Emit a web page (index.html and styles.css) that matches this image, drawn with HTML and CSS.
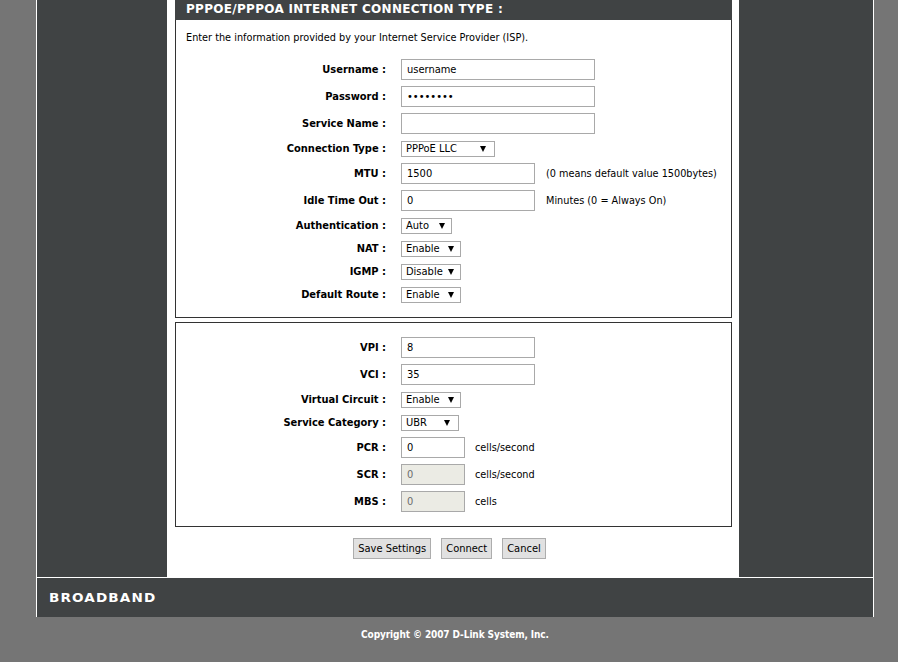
FILE: index.html
```html
<!DOCTYPE html>
<html>
<head>
<meta charset="utf-8">
<title>PPPoE/PPPoA Internet Connection Type</title>
<link rel="stylesheet" href="styles.css">
</head>
<body>
<div class="wrap">
  <div class="cols">
    <div class="side side-left"></div>
    <div class="main">
      <div class="box">
        <h2 class="box-head">PPPoE/PPPoA Internet Connection Type :</h2>
        <div class="box-body box-first">
          <p class="intro">Enter the information provided by your Internet Service Provider (ISP).</p>
          <div class="form">
            <div class="row row-text"><label class="lbl">Username :</label><input class="tin w-long" type="text" value="username"></div>
            <div class="row row-text"><label class="lbl">Password :</label><input class="tin w-long" type="password" value="password"></div>
            <div class="row row-text"><label class="lbl">Service Name :</label><input class="tin w-long" type="text" value=""></div>
            <div class="row row-sel"><label class="lbl">Connection Type :</label><span class="sel w-conn"><span class="sel-text">PPPoE LLC</span><span class="arrow"></span></span></div>
            <div class="row row-text"><label class="lbl">MTU :</label><input class="tin w-mid" type="text" value="1500"><span class="note">(0 means default value 1500bytes)</span></div>
            <div class="row row-text"><label class="lbl">Idle Time Out :</label><input class="tin w-mid" type="text" value="0"><span class="note">Minutes (0 = Always On)</span></div>
            <div class="row row-sel"><label class="lbl">Authentication :</label><span class="sel w-auth"><span class="sel-text">Auto</span><span class="arrow"></span></span></div>
            <div class="row row-sel"><label class="lbl">NAT :</label><span class="sel w-en"><span class="sel-text">Enable</span><span class="arrow"></span></span></div>
            <div class="row row-sel"><label class="lbl">IGMP :</label><span class="sel w-en"><span class="sel-text">Disable</span><span class="arrow"></span></span></div>
            <div class="row row-sel"><label class="lbl">Default Route :</label><span class="sel w-en"><span class="sel-text">Enable</span><span class="arrow"></span></span></div>
          </div>
        </div>
      </div>
      <div class="box-body box-second">
        <div class="form">
          <div class="row row-text"><label class="lbl">VPI :</label><input class="tin w-mid" type="text" value="8"></div>
          <div class="row row-text"><label class="lbl">VCI :</label><input class="tin w-mid" type="text" value="35"></div>
          <div class="row row-sel"><label class="lbl">Virtual Circuit :</label><span class="sel w-en"><span class="sel-text">Enable</span><span class="arrow"></span></span></div>
          <div class="row row-sel"><label class="lbl">Service Category :</label><span class="sel w-cat"><span class="sel-text">UBR</span><span class="arrow"></span></span></div>
          <div class="row row-text"><label class="lbl">PCR :</label><input class="tin w-short" type="text" value="0"><span class="note note-s">cells/second</span></div>
          <div class="row row-text"><label class="lbl">SCR :</label><input class="tin w-short" type="text" value="0" disabled><span class="note note-s">cells/second</span></div>
          <div class="row row-text"><label class="lbl">MBS :</label><input class="tin w-short" type="text" value="0" disabled><span class="note note-s">cells</span></div>
        </div>
      </div>
      <div class="buttons">
        <button class="btn" type="button">Save Settings</button>
        <button class="btn" type="button">Connect</button>
        <button class="btn" type="button">Cancel</button>
      </div>
    </div>
    <div class="side side-right"></div>
  </div>
  <div class="footer"><span class="brand">BROADBAND</span></div>
</div>
<div class="copyright">Copyright &copy; 2007 D-Link System, Inc.</div>
</body>
</html>
```
FILE: styles.css
```css
html, body {
  margin: 0;
  padding: 0;
}
body {
  background: #757575;
  font-family: "DejaVu Sans Condensed", "Liberation Sans", sans-serif;
  font-size: 11px;
  color: #000;
}
.wrap {
  margin-left: 36px;
  width: 836px;
  border-left: 1px solid #fff;
  border-right: 1px solid #fff;
}
.cols {
  display: flex;
  height: 577px;
}
.side {
  background: #404344;
}
.side-left {
  width: 130px;
}
.side-right {
  width: 134px;
}
.main {
  width: 572px;
  box-sizing: border-box;
  padding: 0 7px 0 8px;
  background: #fff;
}
.box-head {
  margin: 0;
  height: 20px;
  line-height: 19px;
  padding-left: 11px;
  background: #404344;
  color: #fff;
  font-family: "DejaVu Sans", Verdana, sans-serif;
  font-size: 12px;
  font-weight: bold;
  letter-spacing: 0.3px;
  text-transform: uppercase;
}
.box-body {
  border: 1px solid #333;
}
.box-first {
  border-top: 0;
  height: 298px;
  box-sizing: border-box;
}
.box-second {
  margin-top: 4px;
  height: 205px;
  box-sizing: border-box;
  padding-top: 11px;
}
.intro {
  margin: 0;
  padding: 11px 0 0 10px;
  height: 25px;
  line-height: 14px;
  font-size: 10.8px;
}
.form {
  display: flex;
  flex-direction: column;
}
.row {
  display: flex;
  align-items: center;
}
.row-text {
  height: 27px;
}
.row-sel {
  height: 23px;
}
.lbl {
  width: 210px;
  margin-right: 15px;
  text-align: right;
  font-weight: bold;
  white-space: nowrap;
}
.tin {
  box-sizing: border-box;
  height: 21px;
  margin: 0;
  padding: 0 0 0 5px;
  border: 1px solid #a9a9a9;
  background: #fff;
  font-family: "DejaVu Sans Condensed", "Liberation Sans", sans-serif;
  font-size: 11px;
  color: #000;
  outline: none;
}
.tin:disabled {
  background: #ebebe4;
  color: #6d6d6d;
}
.w-long { width: 194px; }
.w-mid { width: 134px; }
.w-short { width: 64px; }
.note {
  margin-left: 11px;
  white-space: nowrap;
  font-size: 10.8px;
}
.note-s {
  margin-left: 10px;
}
.sel {
  box-sizing: border-box;
  height: 16px;
  display: flex;
  align-items: center;
  justify-content: space-between;
  padding: 0 6px 0 4px;
  border: 1px solid #a9a9a9;
  background: #fff;
  font-size: 11px;
}
.w-conn { width: 94px; padding-right: 8px; }
.w-auth { width: 51px; }
.w-en { width: 60px; }
.w-cat { width: 58px; padding-right: 8px; }
.arrow {
  width: 0;
  height: 0;
  border-left: 3.5px solid transparent;
  border-right: 3.5px solid transparent;
  border-top: 6px solid #000;
}
.buttons {
  display: flex;
  justify-content: center;
  gap: 10px;
  padding: 11px 8px 0 0;
}
.btn {
  box-sizing: border-box;
  height: 21px;
  margin: 0;
  padding: 0 4px;
  border: 1px solid #adadad;
  border-radius: 0;
  background: #e1e1e1;
  font-family: "DejaVu Sans Condensed", "Liberation Sans", sans-serif;
  font-size: 11px;
  color: #000;
}
.footer {
  border-top: 1px solid #fff;
  height: 39px;
  background: #404344;
  display: flex;
  align-items: center;
  padding-left: 12px;
}
.brand {
  display: inline-block;
  color: #fff;
  font-family: "DejaVu Sans", sans-serif;
  font-size: 12px;
  font-weight: bold;
  letter-spacing: 1px;
  transform: scaleX(1.13);
  transform-origin: left center;
}
.copyright {
  margin-left: 36px;
  width: 838px;
  text-align: center;
  color: #fff;
  font-weight: bold;
  font-size: 10px;
  letter-spacing: -0.1px;
  padding-top: 11px;
  line-height: 14px;
}
```
